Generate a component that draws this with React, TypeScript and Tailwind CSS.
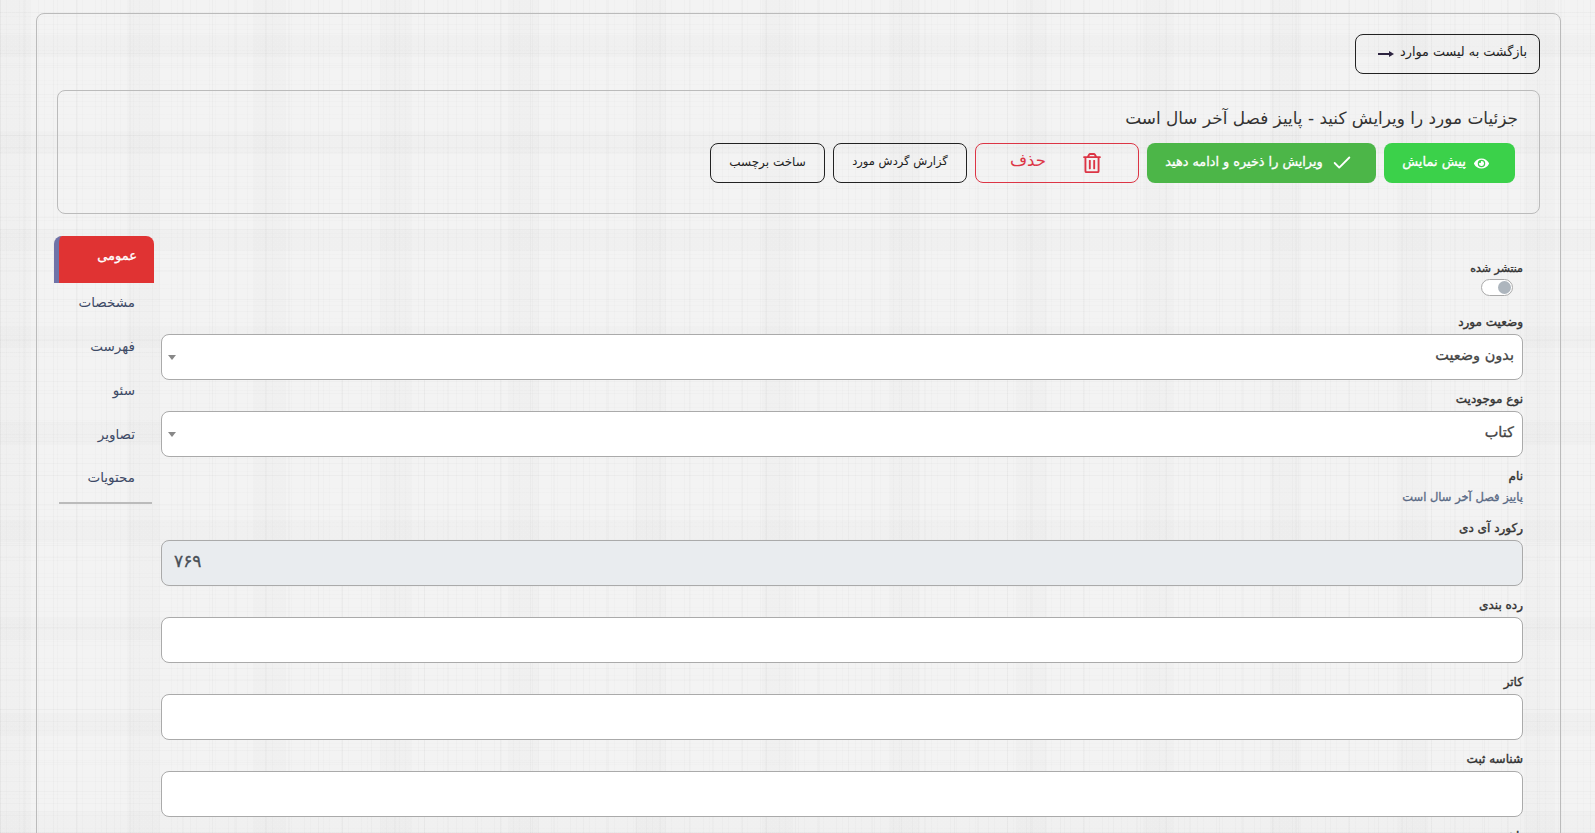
import React from 'react';
import { Check } from 'lucide-react';
import { FaEye, FaRegTrashAlt } from 'react-icons/fa';

const fontStack = "font-['DejaVu_Sans','Noto_Sans',sans-serif]";
const labelClass = 'block text-[12px] text-[#333] leading-[20px] h-[22px] [-webkit-text-stroke:0.4px]';

const Field = ({ label, value, disabled }: { label: string; value?: string; disabled?: boolean }) => (
  <div className="mb-[9px]">
    <label className={labelClass}>{label}</label>
    <div
      className={`h-[46px] rounded-lg border border-[#aaa] flex items-center px-3 text-[17px] ${
        disabled ? 'bg-[#e9ecef]' : 'bg-white'
      }`}
    >
      {value && (
        <span dir="ltr" className="text-[#495057] w-full text-left pb-[3px] [-webkit-text-stroke:0.3px]">
          {value}
        </span>
      )}
    </div>
  </div>
);

const SelectField = ({ label, value }: { label: string; value: string }) => (
  <div className="mb-[9px]">
    <label className={labelClass}>{label}</label>
    <div className="h-[46px] rounded-lg border border-[#aaa] bg-white flex items-center justify-between pr-2 pl-[6px]">
      <span className="text-[14.5px] pb-[3px] text-[#444] [-webkit-text-stroke:0.3px]">{value}</span>
      <span className="w-0 h-0 mt-[1px] border-x-4 border-x-transparent border-t-[5px] border-t-[#888]" />
    </div>
  </div>
);

const tabs = ['مشخصات', 'فهرست', 'سئو', 'تصاویر', 'محتویات'];

const App = () => {
  return (
    <div
      dir="rtl"
      className={`${fontStack} h-screen overflow-hidden bg-[#f3f3f3] bg-[repeating-linear-gradient(0deg,rgba(0,0,0,0.012)_0px,rgba(0,0,0,0.012)_1px,transparent_1px,transparent_4px,rgba(0,0,0,0.009)_4px,rgba(0,0,0,0.009)_5px,transparent_5px,transparent_17px),repeating-linear-gradient(90deg,rgba(0,0,0,0.014)_0px,rgba(0,0,0,0.014)_1px,transparent_1px,transparent_6px,rgba(0,0,0,0.01)_6px,rgba(0,0,0,0.01)_7px,transparent_7px,transparent_19px),repeating-linear-gradient(0deg,rgba(0,0,0,0.018)_0px,rgba(0,0,0,0.018)_1px,transparent_1px,transparent_29px,rgba(0,0,0,0.014)_29px,rgba(0,0,0,0.014)_30px,transparent_30px,transparent_41px),repeating-linear-gradient(90deg,rgba(0,0,0,0.022)_0px,rgba(0,0,0,0.022)_1px,transparent_1px,transparent_23px,rgba(0,0,0,0.016)_23px,rgba(0,0,0,0.016)_25px,transparent_25px,transparent_53px),repeating-linear-gradient(0deg,rgba(0,0,0,0.01)_0px,rgba(0,0,0,0.01)_22px,transparent_22px,transparent_97px),repeating-linear-gradient(90deg,rgba(0,0,0,0.01)_0px,rgba(0,0,0,0.01)_31px,transparent_31px,transparent_127px)] pt-[13px] pr-[34px] pl-[36px]`}
    >
      <div className="rounded-lg border border-[#bbb] pt-5 pr-[20px] pl-[16px]">
        <button className="flex items-center gap-[6px] h-10 w-[185px] pr-[12px] rounded-lg border border-[#222] text-[12.8px] text-[#222]">
          <span className="pb-[5px]">بازگشت به لیست موارد</span>
          <svg width="16" height="8" viewBox="0 0 16 8" className="shrink-0">
            <path d="M0 4h12" stroke="#2d2440" strokeWidth="2" />
            <path d="M11 1l5 3-5 3z" fill="#2d2440" />
          </svg>
        </button>

        <div className="mt-[16px] mr-0 ml-[4px] h-[124px] rounded-lg border border-[#bbb] pt-[15px] pr-5">
          <h1 className="text-[16.9px] leading-[24px] text-[#333] pr-[1px]">
            جزئیات مورد را ویرایش کنید - پاییز فصل آخر سال است
          </h1>
          <div className="flex gap-2 mt-[13px] pr-[4px]">
            <button className="flex items-center justify-center gap-2 h-10 w-[131px] pr-2 pb-[2px] rounded-lg bg-[#3bd14a] text-white text-[13px] [-webkit-text-stroke:0.3px]">
              <FaEye className="text-[15px] mt-[3px]" />
              پیش نمایش
            </button>
            <button className="flex items-center justify-center gap-2 h-10 w-[229px] pr-[5px] pb-[2px] rounded-lg bg-[#4cb648] text-white text-[12.8px] [-webkit-text-stroke:0.3px]">
              <Check size={22} strokeWidth={2} className="mt-[2px]" />
              ویرایش را ذخیره و ادامه دهید
            </button>
            <button className="flex items-center justify-center gap-9 h-10 w-[164px] pr-[2px] rounded-lg border border-[#dc3545] text-[#dc3545] text-[16.5px]">
              <FaRegTrashAlt className="text-[20px]" />
              <span className="pb-[3px]">حذف</span>
            </button>
            <button className="flex items-center justify-center h-10 w-[134px] pb-[2px] rounded-lg border border-[#222] text-[#222] text-[11.5px]">
              گزارش گردش مورد
            </button>
            <button className="flex items-center justify-center h-10 w-[115px] pb-[2px] rounded-lg border border-[#222] text-[#222] text-[12px]">
              ساخت برچسب
            </button>
          </div>
        </div>

        <div className="flex mt-[22px] ml-[1px]">
          <div className="flex-1 pt-[24px] mr-[17px] ml-[7px]">
            <label className="block text-[11px] text-[#333] leading-[18px] h-[18px] [-webkit-text-stroke:0.4px]">
              منتشر شده
            </label>
            <div className="h-[17px] w-[32px] mr-[10px] mt-[1px] rounded-full border border-[#aaa] bg-white flex items-center pr-[1px]">
              <span className="w-[13px] h-[13px] rounded-full bg-[#adb5bd]" />
            </div>
            <div className="mt-[16px]">
              <SelectField label="وضعیت مورد" value="بدون وضعیت" />
              <SelectField label="نوع موجودیت" value="کتاب" />
            </div>
            <div className="mb-[10px]">
              <label className={labelClass}>نام</label>
              <p className="text-[11.5px] text-[#5a6a85] leading-[18px] h-[20px] [-webkit-text-stroke:0.3px]">
                پاییز فصل آخر سال است
              </p>
            </div>
            <Field label="رکورد آی دی" value="۷۶۹" disabled />
            <Field label="رده بندی" />
            <Field label="کاتر" />
            <Field label="شناسه ثبت" />
            <Field label="ناشر" />
          </div>

          <div className="w-[100px] shrink-0">
            <div className="h-[47px] pb-[8px] rounded-t-lg border-l-[5px] border-l-[#6f73a8] bg-[#e03333] text-white text-[13px] [-webkit-text-stroke:0.3px] flex items-center pr-[17px]">
              عمومی
            </div>
            <div className="w-[93px] mr-[2px] border-b-2 border-b-[#bbb]">
              {tabs.map((tab) => (
                <div key={tab} className="h-11 last:h-[43px] pb-[6px] flex items-center pr-[17px] text-[13.5px] text-[#3d4a66]">
                  {tab}
                </div>
              ))}
            </div>
          </div>
        </div>
      </div>
    </div>
  );
};

export default App;
